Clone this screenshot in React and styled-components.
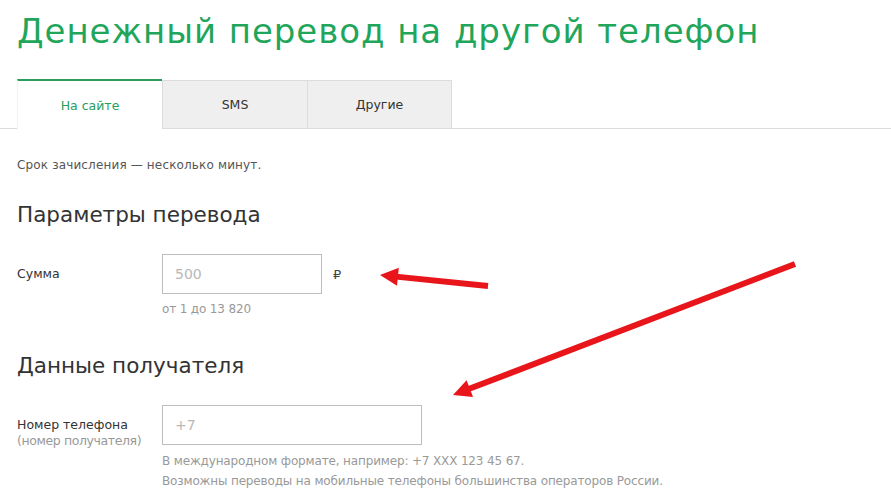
import React from "react";
import styled, { createGlobalStyle } from "styled-components";

const Global = createGlobalStyle`
  html, body { margin: 0; padding: 0; background: #fff; }
  body { font-family: "DejaVu Sans", "Open Sans", Arial, sans-serif; color: #333; }
  * { box-sizing: border-box; }
`;

const Page = styled.div`
  position: relative;
  width: 891px;
  height: 499px;
  overflow: hidden;
  padding-left: 17px;
`;

const Title = styled.h1`
  margin: 7px 0 0;
  font-size: 34px;
  line-height: 48px;
  font-weight: 400;
  color: #1fa65b;
  letter-spacing: 0.95px;
  white-space: nowrap;
`;

const Tabs = styled.div`
  display: flex;
  margin-top: 24px;
  margin-left: -17px;
  padding-left: 17px;
  border-bottom: 1px solid #dcdcdc;
`;

const Tab = styled.div`
  width: 145px;
  display: flex;
  align-items: center;
  justify-content: center;
  font-size: 12.5px;
  background: ${(p) => (p.$active ? "#fff" : "#efefef")};
  color: ${(p) => (p.$active ? "#2a9d5c" : "#333")};
  border-top: ${(p) => (p.$active ? "2px solid #2a9d5c" : "1px solid #dcdcdc")};
  border-left: ${(p) => (p.$first ? "1px solid #f2f2f2" : "1px solid #dcdcdc")};
  border-right: ${(p) => (p.$last ? "1px solid #dcdcdc" : "none")};
  margin-top: ${(p) => (p.$active ? "0" : "1px")};
  margin-bottom: ${(p) => (p.$active ? "-1px" : "0")};
  height: ${(p) => (p.$active ? "50px" : "48px")};
`;

const Note = styled.p`
  margin: 28px 0 0;
  font-size: 12px;
  line-height: 16px;
  letter-spacing: 0.15px;
  color: #555;
`;

const Section = styled.h2`
  margin: ${(p) => p.$mt}px 0 0;
  font-size: 21.5px;
  line-height: 28px;
  font-weight: 400;
  color: #333;
`;

const Row = styled.div`
  display: grid;
  grid-template-columns: 145px auto;
  margin-top: ${(p) => p.$mt}px;
`;

const Label = styled.div`
  padding-top: 12px;
  font-size: 12.5px;
  line-height: 16px;
  color: #333;
`;

const Sub = styled.div`
  color: #999;
  letter-spacing: -0.4px;
`;

const Field = styled.div`
  display: flex;
  flex-direction: column;
`;

const InputLine = styled.div`
  display: flex;
  align-items: center;
  gap: 11px;
`;

const Input = styled.div`
  width: ${(p) => p.$w}px;
  height: 40px;
  border: 1px solid #bdbdbd;
  display: flex;
  align-items: center;
  padding-left: 12px;
  font-size: 14px;
  color: #b8b8b8;
`;

const Currency = styled.span`
  font-size: 13px;
  color: #444;
`;

const Hint = styled.div`
  margin-top: ${(p) => p.$mt || 0}px;
  font-size: 12px;
  line-height: 20px;
  letter-spacing: -0.15px;
  color: #999;
`;

const Arrows = styled.svg`
  position: absolute;
  left: 0;
  top: 0;
  pointer-events: none;
`;

function Arrow({ x1, y1, x2, y2 }) {
  const dx = x2 - x1;
  const dy = y2 - y1;
  const len = Math.hypot(dx, dy);
  const ux = dx / len;
  const uy = dy / len;
  const hl = 18;
  const hw = 9;
  const bx = x2 - ux * hl;
  const by = y2 - uy * hl;
  const px = -uy;
  const py = ux;
  return (
    <g>
      <line x1={x1} y1={y1} x2={bx + ux * 2} y2={by + uy * 2} stroke="#e8151b" strokeWidth="6" />
      <polygon
        points={`${x2},${y2} ${bx + px * hw},${by + py * hw} ${bx - px * hw},${by - py * hw}`}
        fill="#e8151b"
      />
    </g>
  );
}

export default function App() {
  return (
    <>
      <Global />
      <Page>
        <Title>Денежный перевод на другой телефон</Title>
        <Tabs>
          <Tab $active $first>На сайте</Tab>
          <Tab>SMS</Tab>
          <Tab $last>Другие</Tab>
        </Tabs>
        <Note>Срок зачисления — несколько минут.</Note>
        <Section $mt={28}>Параметры перевода</Section>
        <Row $mt={25}>
          <Label>Сумма</Label>
          <Field>
            <InputLine>
              <Input $w={160}>500</Input>
              <Currency>₽</Currency>
            </InputLine>
            <Hint $mt={5}>от 1 до 13 820</Hint>
          </Field>
        </Row>
        <Section $mt={33}>Данные получателя</Section>
        <Row $mt={25}>
          <Label>
            Номер телефона
            <Sub>(номер получателя)</Sub>
          </Label>
          <Field>
            <Input $w={260}>+7</Input>
            <Hint $mt={6}>В международном формате, например: +7 XXX 123 45 67.</Hint>
            <Hint>Возможны переводы на мобильные телефоны большинства операторов России.</Hint>
          </Field>
        </Row>
        <Arrows width="891" height="499" viewBox="0 0 891 499">
          <Arrow x1={488} y1={286} x2={380} y2={275} />
          <Arrow x1={795} y1={264} x2={453} y2={395} />
        </Arrows>
      </Page>
    </>
  );
}
